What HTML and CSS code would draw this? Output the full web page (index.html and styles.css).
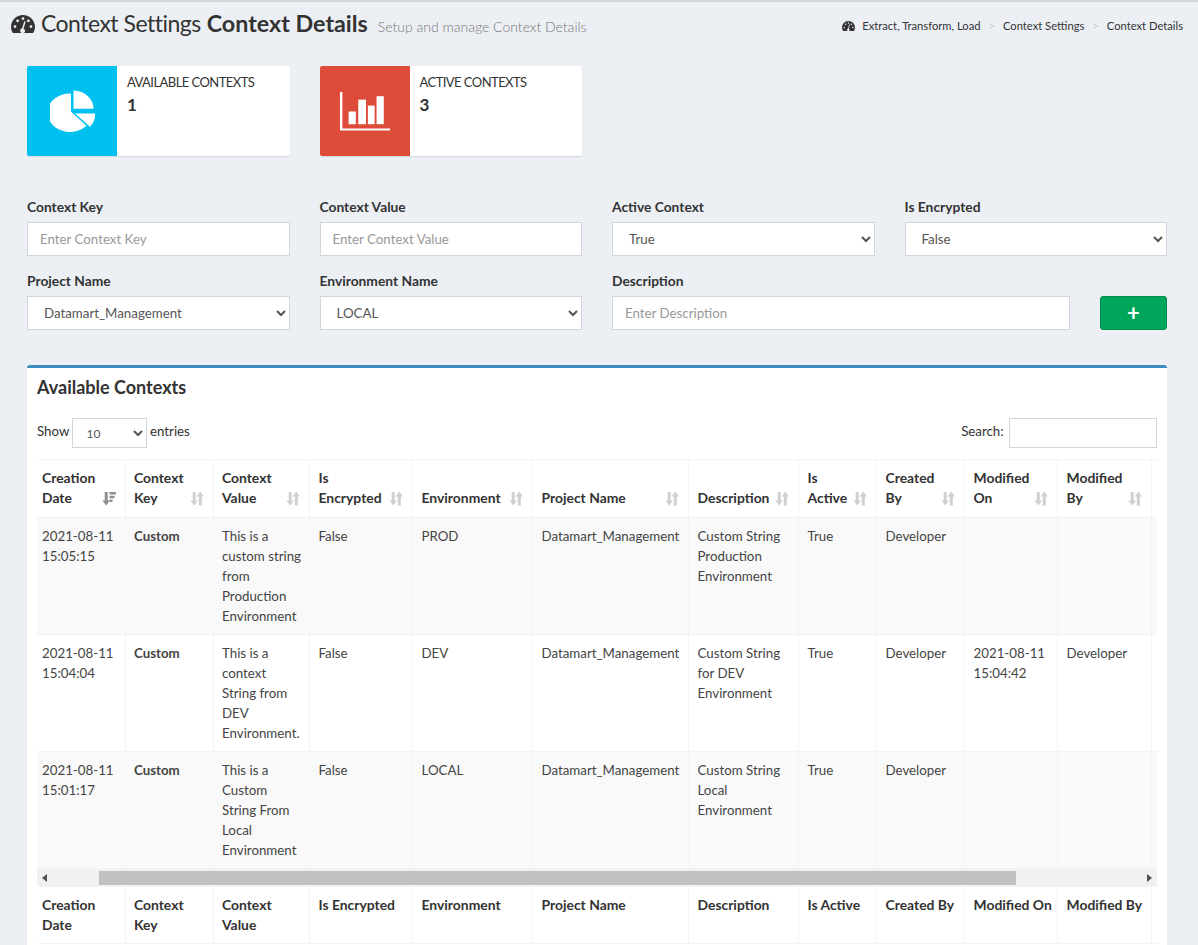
FILE: index.html
```html
<!DOCTYPE html>
<html lang="en">
<head>
    <meta charset="UTF-8">
    <meta name="viewport" content="width=device-width, initial-scale=1.0">
    <title>Context Details</title>
    <link rel="stylesheet" href="styles.css">
</head>
<body>
    <svg class="sprites" width="0" height="0">
        <symbol id="gauge" viewBox="0 0 24 18" preserveAspectRatio="none">
            <path fill-rule="evenodd" d="M12 0C5.400 0 0 5.200 0 11.800c0 2.200 0.600 4.200 1.700 5.900 0.100 0.200 0.300 0.300 0.500 0.300h19.600c0.200 0 0.400-0.100 0.500-0.300 1.100-1.700 1.700-3.700 1.700-5.900C24 5.200 18.600 0 12 0zM4 13a1.400 1.400 0 1 1 0-2.800 1.400 1.400 0 0 1 0 2.800zM6.600 7.200a1.400 1.400 0 1 1 0-2.800 1.400 1.400 0 0 1 0 2.800zM12 5a1.400 1.400 0 1 1 0-2.800 1.400 1.400 0 0 1 0 2.800zM17.400 7.200a1.400 1.400 0 1 1 0-2.800 1.400 1.400 0 0 1 0 2.800zM20 13a1.400 1.400 0 1 1 0-2.800 1.400 1.400 0 0 1 0 2.800zM14.200 15.500a2.500 2.500 0 0 1-5 0.200c0-1.200 0.800-2.200 1.900-2.400l2-6.500c0.100-0.400 0.500-0.600 0.900-0.500 0.400 0.100 0.600 0.500 0.500 0.900l-2 6.500c1 0.500 1.700 1.200 1.700 2.300z"/>
        </symbol>
        <symbol id="sort" viewBox="0 0 14 14">
            <path d="M2.700 0.500h3v8.500H8L4.200 14 0.400 9h2.300z"/>
            <path d="M10.300 0l3.700 5h-2.200v9h-3V5H6.600z"/>
        </symbol>
        <symbol id="sort-desc" viewBox="0 0 14 14">
            <path d="M2.700 0.500h3v8.500H8L4.200 14 0.400 9h2.300z"/>
            <path d="M7.500 0.500H14V3H7.500zM7.500 4.300H12.500V6.800H7.500zM7.500 8H10.500V10.500H7.500z"/>
        </symbol>
    </svg>

    <div class="page">
        <header class="page-head">
            <h1>
                <svg class="head-icon"><use href="#gauge"/></svg>
                <span class="title-light">Context Settings</span> <b>Context Details</b>
                <small>Setup and manage Context Details</small>
            </h1>
            <ol class="breadcrumb">
                <li><svg class="crumb-icon"><use href="#gauge"/></svg>Extract, Transform, Load</li>
                <li>Context Settings</li>
                <li>Context Details</li>
            </ol>
        </header>

        <div class="content">
            <section class="stats">
                <div class="info-box">
                    <span class="info-icon bg-cyan">
                        <svg width="45" height="42" viewBox="0 0 45 49" preserveAspectRatio="none" fill="#fff">
                            <path d="M21 4V25.500L36.500 41.800A22.500 22.500 0 1 1 21 4z"/>
                            <path d="M23.500 0.500A21 21 0 0 1 43.500 22H23.500z"/>
                            <path d="M25 27.500H45A22 22 0 0 1 40 43z"/>
                        </svg>
                    </span>
                    <div class="info-text">
                        <span class="info-label">AVAILABLE CONTEXTS</span>
                        <span class="info-number">1</span>
                    </div>
                </div>
                <div class="info-box">
                    <span class="info-icon bg-red">
                        <svg width="52" height="39" viewBox="0 0 54 46" preserveAspectRatio="none" fill="#fff">
                            <path d="M1 0H3.500V43H53V45.500H1z"/>
                            <rect x="10" y="23" width="7.500" height="15"/>
                            <rect x="20" y="9" width="8" height="29"/>
                            <rect x="30" y="16" width="7" height="22"/>
                            <rect x="39" y="5" width="7.500" height="33"/>
                        </svg>
                    </span>
                    <div class="info-text">
                        <span class="info-label">ACTIVE CONTEXTS</span>
                        <span class="info-number">3</span>
                    </div>
                </div>
            </section>

            <form class="context-form">
                <div class="field">
                    <label>Context Key</label>
                    <input type="text" placeholder="Enter Context Key">
                </div>
                <div class="field">
                    <label>Context Value</label>
                    <input type="text" placeholder="Enter Context Value">
                </div>
                <div class="field">
                    <label>Active Context</label>
                    <select><option>True</option><option>False</option></select>
                </div>
                <div class="field">
                    <label>Is Encrypted</label>
                    <select><option>False</option><option>True</option></select>
                </div>
                <div class="field">
                    <label>Project Name</label>
                    <select><option>Datamart_Management</option></select>
                </div>
                <div class="field">
                    <label>Environment Name</label>
                    <select><option>LOCAL</option><option>DEV</option><option>PROD</option></select>
                </div>
                <div class="field-wide">
                    <div class="field grow">
                        <label>Description</label>
                        <input type="text" placeholder="Enter Description">
                    </div>
                    <button type="button" class="btn-add">+</button>
                </div>
            </form>

            <section class="box">
                <h3 class="box-title">Available Contexts</h3>
                <div class="table-tools">
                    <label>Show <select class="length-select"><option>10</option><option>25</option></select> entries</label>
                    <label>Search: <input type="search" class="search-input"></label>
                </div>
                <div class="table-wrap">
                    <table class="data-table">
                        <colgroup>
                            <col class="c1"><col class="c2"><col class="c3"><col class="c4"><col class="c5"><col class="c6">
                            <col class="c7"><col class="c8"><col class="c9"><col class="c10"><col class="c11"><col class="c12">
                        </colgroup>
                        <thead>
                            <tr>
                                <th>Creation<br>Date<svg class="sort-icon active"><use href="#sort-desc"/></svg></th>
                                <th>Context<br>Key<svg class="sort-icon"><use href="#sort"/></svg></th>
                                <th>Context<br>Value<svg class="sort-icon"><use href="#sort"/></svg></th>
                                <th>Is<br>Encrypted<svg class="sort-icon"><use href="#sort"/></svg></th>
                                <th>Environment<svg class="sort-icon"><use href="#sort"/></svg></th>
                                <th>Project Name<svg class="sort-icon"><use href="#sort"/></svg></th>
                                <th>Description<svg class="sort-icon"><use href="#sort"/></svg></th>
                                <th>Is<br>Active<svg class="sort-icon"><use href="#sort"/></svg></th>
                                <th>Created<br>By<svg class="sort-icon"><use href="#sort"/></svg></th>
                                <th>Modified<br>On<svg class="sort-icon"><use href="#sort"/></svg></th>
                                <th>Modified<br>By<svg class="sort-icon"><use href="#sort"/></svg></th>
                                <th></th>
                            </tr>
                        </thead>
                        <tbody>
                            <tr>
                                <td>2021-08-11<br>15:05:15</td>
                                <td><b>Custom</b></td>
                                <td>This is a<br>custom string<br>from<br>Production<br>Environment</td>
                                <td>False</td>
                                <td>PROD</td>
                                <td>Datamart_Management</td>
                                <td>Custom String<br>Production<br>Environment</td>
                                <td>True</td>
                                <td>Developer</td>
                                <td></td>
                                <td></td>
                                <td></td>
                            </tr>
                            <tr>
                                <td>2021-08-11<br>15:04:04</td>
                                <td><b>Custom</b></td>
                                <td>This is a<br>context<br>String from<br>DEV<br>Environment.</td>
                                <td>False</td>
                                <td>DEV</td>
                                <td>Datamart_Management</td>
                                <td>Custom String<br>for DEV<br>Environment</td>
                                <td>True</td>
                                <td>Developer</td>
                                <td>2021-08-11<br>15:04:42</td>
                                <td>Developer</td>
                                <td></td>
                            </tr>
                            <tr>
                                <td>2021-08-11<br>15:01:17</td>
                                <td><b>Custom</b></td>
                                <td>This is a<br>Custom<br>String From<br>Local<br>Environment</td>
                                <td>False</td>
                                <td>LOCAL</td>
                                <td>Datamart_Management</td>
                                <td>Custom String<br>Local<br>Environment</td>
                                <td>True</td>
                                <td>Developer</td>
                                <td></td>
                                <td></td>
                                <td></td>
                            </tr>
                        </tbody>
                    </table>
                    <div class="fake-scrollbar">
                        <span class="arrow-left"></span>
                        <span class="thumb"></span>
                        <span class="arrow-right"></span>
                    </div>
                    <table class="data-table foot-table">
                        <colgroup>
                            <col class="c1"><col class="c2"><col class="c3"><col class="c4"><col class="c5"><col class="c6">
                            <col class="c7"><col class="c8"><col class="c9"><col class="c10"><col class="c11"><col class="c12">
                        </colgroup>
                        <tfoot>
                            <tr>
                                <th>Creation<br>Date</th>
                                <th>Context<br>Key</th>
                                <th>Context<br>Value</th>
                                <th>Is Encrypted</th>
                                <th>Environment</th>
                                <th>Project Name</th>
                                <th>Description</th>
                                <th>Is Active</th>
                                <th>Created By</th>
                                <th>Modified On</th>
                                <th>Modified By</th>
                                <th></th>
                            </tr>
                        </tfoot>
                    </table>
                </div>
            </section>
        </div>
    </div>
</body>
</html>
```

FILE: styles.css
```css
* {
    box-sizing: border-box;
}

html, body {
    margin: 0;
    height: 100%;
    overflow: hidden;
}

body {
    font-family: "Lato", "Open Sans", sans-serif;
    font-size: 13.3px;
    line-height: 20px;
    color: #333;
    background: #ecf0f5;
}

.sprites {
    position: absolute;
}

.page {
    height: 945px;
    overflow: hidden;
    border-top: 2px solid #d2d6de;
}

/* header */
.page-head {
    display: flex;
    justify-content: space-between;
    align-items: center;
    padding: 0 15px 0 11px;
    height: 48px;
}

.page-head h1 {
    margin: 0 0 2px;
    font-size: 23px;
    font-weight: 400;
    line-height: 30px;
    white-space: nowrap;
}

.title-light {
    letter-spacing: -0.5px;
}

.page-head h1 b {
    font-size: 23.3px;
    font-weight: 700;
}

.page-head small {
    font-size: 14px;
    font-weight: 300;
    color: #777;
    margin-left: 4px;
}

.head-icon {
    width: 24px;
    height: 18px;
    fill: #333;
    vertical-align: -1px;
}

.breadcrumb {
    display: flex;
    margin: 0;
    padding: 0;
    list-style: none;
    font-size: 11.2px;
}

.breadcrumb li + li::before {
    content: ">";
    color: #ccc;
    padding: 0 8px;
}

.crumb-icon {
    width: 13px;
    height: 10px;
    margin-right: 7px;
    fill: #333;
    vertical-align: -1px;
}

/* main */
.content {
    padding: 16px 31px 0 27px;
}

.stats {
    display: grid;
    grid-template-columns: repeat(4, 1fr);
    column-gap: 30px;
    margin-bottom: 41px;
}

.info-box {
    display: flex;
    height: 90px;
    background: #fff;
    border-radius: 2px;
    box-shadow: 0 1px 1px rgba(0, 0, 0, 0.1);
}

.info-icon {
    display: flex;
    align-items: center;
    justify-content: center;
    width: 90px;
    flex: none;
    border-radius: 2px 0 0 2px;
}

.bg-cyan {
    background: #00c0ef;
}

.bg-red {
    background: #dd4b39;
}

.info-text {
    display: flex;
    flex-direction: column;
    padding: 6px 10px;
}

.info-label {
    font-size: 13px;
    letter-spacing: -0.55px;
}

.info-number {
    font-size: 17px;
    font-weight: 700;
    line-height: 24px;
    margin-top: 1px;
}

/* form */
.context-form {
    display: grid;
    grid-template-columns: repeat(4, 1fr);
    column-gap: 30px;
    row-gap: 15px;
    margin-bottom: 35px;
}

.field {
    display: flex;
    flex-direction: column;
    min-width: 0;
}

.field label {
    font-size: 13.8px;
    font-weight: 700;
    margin-bottom: 5px;
}

.field-wide {
    grid-column: 3 / 5;
    display: flex;
    align-items: flex-end;
    gap: 30px;
}

.grow {
    flex: 1;
}

.field input,
.field select {
    height: 34px;
    width: 100%;
    padding: 6px 12px;
    font-family: inherit;
    font-size: 13.3px;
    color: #555;
    background: #fff;
    border: 1px solid #d2d6de;
    border-radius: 0;
}

.field input::placeholder {
    color: #999;
}

.btn-add {
    width: 67px;
    height: 34px;
    padding: 0;
    font-family: inherit;
    font-size: 22px;
    font-weight: 700;
    line-height: 30px;
    color: #fff;
    background: #00a65a;
    border: 1px solid #008d4c;
    border-radius: 3px;
}

/* table box */
.box {
    background: #fff;
    border-top: 3px solid #3c8dbc;
    border-radius: 3px 3px 0 0;
    box-shadow: 0 1px 1px rgba(0, 0, 0, 0.1);
    padding: 0 10px;
    height: 640px;
}

.box-title {
    margin: 0;
    padding-top: 9px;
    font-size: 18px;
    line-height: 20px;
    font-weight: 700;
}

.table-tools {
    display: flex;
    justify-content: space-between;
    align-items: center;
    margin-top: 21px;
    height: 30px;
}

.table-tools select,
.table-tools input {
    height: 30px;
    background: #fff;
    border: 1px solid #d2d6de;
    border-radius: 0;
    font-family: inherit;
    vertical-align: middle;
}

.length-select {
    width: 75px;
    margin: 0 0 0 -1px;
    padding: 5px 10px;
    font-size: 12px;
    color: #555;
}

.search-input {
    width: 148px;
    margin-left: 2px;
}

.table-wrap {
    margin-top: 11px;
    overflow: hidden;
}

.data-table {
    table-layout: fixed;
    width: 1120px;
    border-collapse: collapse;
}

.c1 { width: 88px; }
.c2 { width: 88px; }
.c3 { width: 96px; }
.c4 { width: 103px; }
.c5 { width: 120px; }
.c6 { width: 156px; }
.c7 { width: 110px; }
.c8 { width: 78px; }
.c9 { width: 88px; }
.c10 { width: 93px; }
.c11 { width: 94px; }
.c12 { width: 6px; }

.data-table th,
.data-table td {
    padding: 8px 8px 8px 9px;
    text-align: left;
    white-space: nowrap;
    overflow: hidden;
    border: 1px solid #f4f4f4;
}

.data-table th:nth-child(2),
.data-table td:nth-child(2),
.data-table th:nth-child(3),
.data-table td:nth-child(3) {
    padding-left: 8.5px;
}

.data-table th {
    font-size: 13.9px;
}

.data-table th:first-child,
.data-table td:first-child {
    padding-left: 5px;
    border-left: 0;
}

.data-table th:last-child,
.data-table td:last-child {
    padding: 0;
    border-right: 0;
}

.data-table thead th {
    position: relative;
    vertical-align: bottom;
    padding-bottom: 9px;
    height: 58px;
}

.data-table td {
    vertical-align: top;
    color: #444;
    height: 117px;
}

.data-table tbody tr:nth-child(odd) {
    background: #f9f9f9;
}

.sort-icon {
    position: absolute;
    right: 9px;
    bottom: 11px;
    width: 14px;
    height: 15px;
    fill: #d0d0d0;
}

.sort-icon.active {
    fill: #8f8f8f;
}

.fake-scrollbar {
    display: flex;
    align-items: center;
    width: 1120px;
    height: 18px;
    background: #f1f1f1;
    position: relative;
}

.thumb {
    width: 917px;
    height: 14px;
    margin-left: 62px;
    background: #c1c1c1;
}

.arrow-left,
.arrow-right {
    position: absolute;
    top: 5px;
    width: 0;
    height: 0;
    border-top: 4px solid transparent;
    border-bottom: 4px solid transparent;
}

.arrow-left {
    left: 5px;
    border-right: 5px solid #505050;
}

.arrow-right {
    right: 5px;
    border-left: 5px solid #505050;
}

.foot-table th {
    vertical-align: top;
    height: 56px;
    border-top: 0;
    border-bottom: 1px solid #f4f4f4;
}
```
